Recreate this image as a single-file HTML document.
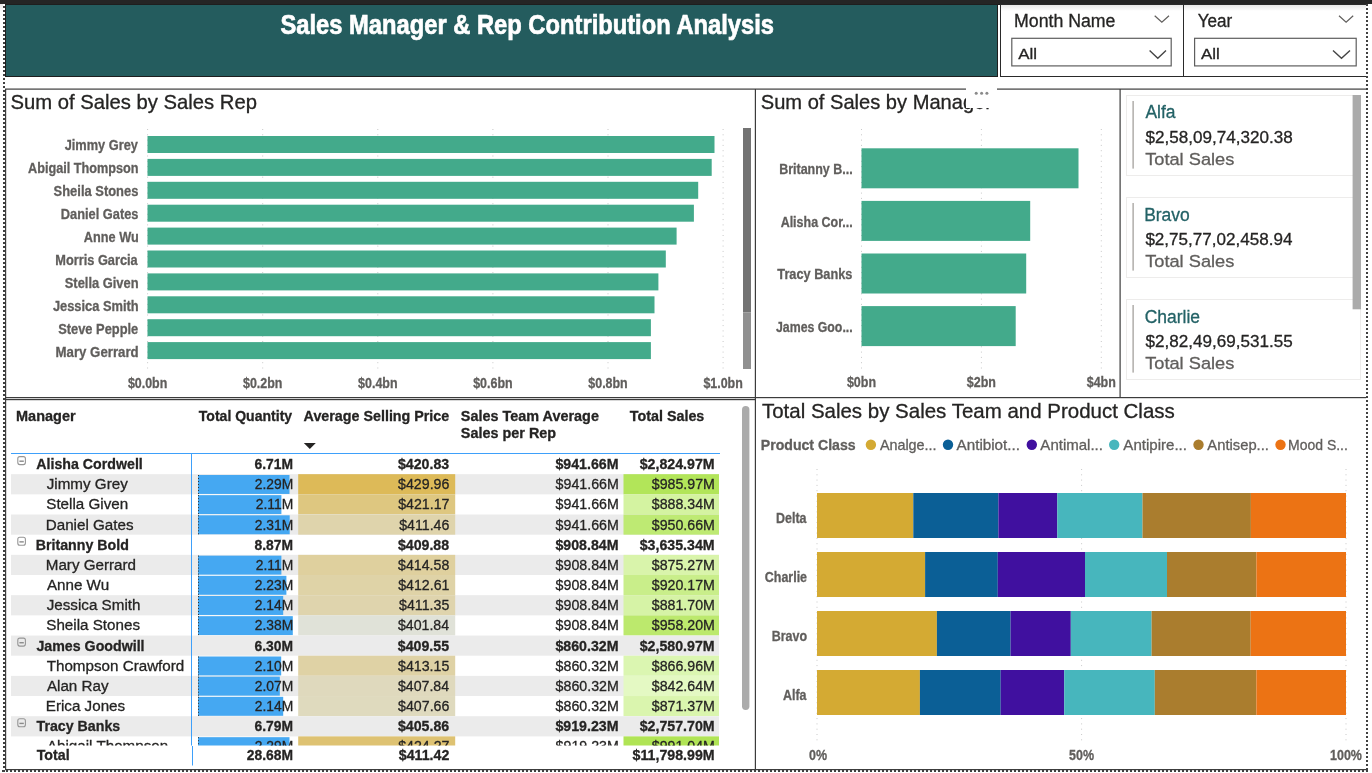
<!DOCTYPE html>
<html><head><meta charset="utf-8"><title>Sales Manager &amp; Rep Contribution Analysis</title><style>html,body{margin:0;padding:0;background:#fff;overflow:hidden}svg{display:block;will-change:transform}text{font-family:"Liberation Sans",sans-serif}</style></head><body>
<svg width="1372" height="773" viewBox="0 0 1372 773" font-family="Liberation Sans, sans-serif">
<rect x="0.00" y="0.00" width="1372.00" height="773.00" fill="#FFFFFF" />
<rect x="0.00" y="0.00" width="1372.00" height="4.00" fill="#252525" />
<rect x="5.00" y="4.00" width="1361.00" height="1.00" fill="#1C1C1C" />
<defs><linearGradient id="sh" x1="0" y1="0" x2="0" y2="1"><stop offset="0" stop-color="#E8E8E8"/><stop offset="1" stop-color="#FFFFFF"/></linearGradient></defs>
<rect x="0.00" y="4.00" width="3.00" height="8.00" fill="url(#sh)" />
<rect x="5.00" y="4.00" width="993.00" height="73.00" fill="#1E1E1E" />
<rect x="6.00" y="5.00" width="991.00" height="71.00" fill="#245C5E" />
<text x="280.43" y="34.10" font-size="27.8" font-weight="bold" fill="#FFFFFF" text-anchor="start" textLength="493.60" lengthAdjust="spacingAndGlyphs" stroke="#FFFFFF" stroke-width="0.7">Sales Manager &amp; Rep Contribution Analysis</text>
<rect x="1000.00" y="4.00" width="366.00" height="73.00" fill="#2A2A2A" />
<rect x="1001.00" y="5.00" width="365.00" height="71.00" fill="#FFFFFF" />
<rect x="1001.00" y="5.00" width="365.00" height="6.00" fill="url(#sh)" />
<rect x="1183.00" y="5.00" width="1.00" height="71.00" fill="#2A2A2A" />
<text x="1014.04" y="27.00" font-size="18" font-weight="normal" fill="#252423" text-anchor="start" textLength="101.40" lengthAdjust="spacingAndGlyphs" stroke="#252423" stroke-width="0.3">Month Name</text>
<polyline points="1154.7,15.8 1161.85,22.3 1169,15.8" fill="none" stroke="#605E5C" stroke-width="1.2"/>
<rect x="1011.8" y="38.3" width="159.4" height="27.6" fill="#FFFFFF" stroke="#5E5E5E" stroke-width="1.2"/>
<text x="1018.27" y="58.70" font-size="14.5" font-weight="normal" fill="#252423" text-anchor="start" textLength="18.79" lengthAdjust="spacingAndGlyphs" stroke="#252423" stroke-width="0.3">All</text>
<polyline points="1149.6,50.6 1157.8,58.2 1166,50.6" fill="none" stroke="#444" stroke-width="1.4"/>
<text x="1197.73" y="27.00" font-size="18" font-weight="normal" fill="#252423" text-anchor="start" textLength="34.58" lengthAdjust="spacingAndGlyphs" stroke="#252423" stroke-width="0.3">Year</text>
<polyline points="1339,15.8 1346.1,22.3 1353.2,15.8" fill="none" stroke="#605E5C" stroke-width="1.2"/>
<rect x="1194.6" y="38.3" width="161.6" height="27.6" fill="#FFFFFF" stroke="#5E5E5E" stroke-width="1.2"/>
<text x="1201.07" y="58.70" font-size="14.5" font-weight="normal" fill="#252423" text-anchor="start" textLength="18.79" lengthAdjust="spacingAndGlyphs" stroke="#252423" stroke-width="0.3">All</text>
<polyline points="1333,50.6 1341.5,58.2 1350,50.6" fill="none" stroke="#444" stroke-width="1.4"/>
<line x1="4" y1="6" x2="4" y2="772" stroke="#404040" stroke-width="2" stroke-dasharray="2 2"/>
<line x1="1367" y1="4" x2="1367" y2="772" stroke="#404040" stroke-width="2" stroke-dasharray="2 2"/>
<line x1="2" y1="771" x2="1368" y2="771" stroke="#404040" stroke-width="2" stroke-dasharray="2 2"/>
<rect x="5.00" y="88.50" width="961.00" height="1.20" fill="#3C3C3C" />
<rect x="997.00" y="88.50" width="369.00" height="1.20" fill="#3C3C3C" />
<rect x="5.00" y="397.00" width="1361.00" height="1.20" fill="#3C3C3C" />
<rect x="5.00" y="398.20" width="750.00" height="0.80" fill="#D0D0D0" />
<rect x="5.00" y="399.00" width="750.00" height="1.20" fill="#3C3C3C" />
<rect x="5.00" y="769.00" width="1361.00" height="1.20" fill="#3C3C3C" />
<rect x="5.00" y="89.00" width="1.20" height="681.00" fill="#3C3C3C" />
<rect x="754.80" y="89.00" width="1.20" height="681.00" fill="#3C3C3C" />
<rect x="1119.50" y="89.00" width="1.20" height="309.00" fill="#3C3C3C" />
<text x="10.44" y="108.90" font-size="20.3" font-weight="normal" fill="#252423" text-anchor="start" textLength="246.49" lengthAdjust="spacingAndGlyphs" stroke="#252423" stroke-width="0.3">Sum of Sales by Sales Rep</text>
<line x1="147.6" y1="129" x2="147.6" y2="372" stroke="#C8C8C8" stroke-width="1" stroke-dasharray="1 4.3"/>
<line x1="262.7" y1="129" x2="262.7" y2="372" stroke="#C8C8C8" stroke-width="1" stroke-dasharray="1 4.3"/>
<line x1="377.8" y1="129" x2="377.8" y2="372" stroke="#C8C8C8" stroke-width="1" stroke-dasharray="1 4.3"/>
<line x1="492.9" y1="129" x2="492.9" y2="372" stroke="#C8C8C8" stroke-width="1" stroke-dasharray="1 4.3"/>
<line x1="608.0" y1="129" x2="608.0" y2="372" stroke="#C8C8C8" stroke-width="1" stroke-dasharray="1 4.3"/>
<line x1="723.1" y1="129" x2="723.1" y2="372" stroke="#C8C8C8" stroke-width="1" stroke-dasharray="1 4.3"/>
<rect x="147.50" y="136.00" width="567.00" height="17.00" fill="#43AA8B" />
<text x="64.68" y="150.40" font-size="14.5" font-weight="bold" fill="#605E5C" text-anchor="start" textLength="73.23" lengthAdjust="spacingAndGlyphs" stroke="#605E5C" stroke-width="0.3">Jimmy Grey</text>
<rect x="147.50" y="158.90" width="564.20" height="17.00" fill="#43AA8B" />
<text x="28.05" y="173.30" font-size="14.5" font-weight="bold" fill="#605E5C" text-anchor="start" textLength="110.56" lengthAdjust="spacingAndGlyphs" stroke="#605E5C" stroke-width="0.3">Abigail Thompson</text>
<rect x="147.50" y="181.80" width="550.70" height="17.00" fill="#43AA8B" />
<text x="53.58" y="196.20" font-size="14.5" font-weight="bold" fill="#605E5C" text-anchor="start" textLength="84.81" lengthAdjust="spacingAndGlyphs" stroke="#605E5C" stroke-width="0.3">Sheila Stones</text>
<rect x="147.50" y="204.70" width="546.40" height="17.00" fill="#43AA8B" />
<text x="60.84" y="219.10" font-size="14.5" font-weight="bold" fill="#605E5C" text-anchor="start" textLength="77.55" lengthAdjust="spacingAndGlyphs" stroke="#605E5C" stroke-width="0.3">Daniel Gates</text>
<rect x="147.50" y="227.60" width="529.10" height="17.00" fill="#43AA8B" />
<text x="83.85" y="242.00" font-size="14.5" font-weight="bold" fill="#605E5C" text-anchor="start" textLength="54.80" lengthAdjust="spacingAndGlyphs" stroke="#605E5C" stroke-width="0.3">Anne Wu</text>
<rect x="147.50" y="250.50" width="518.30" height="17.00" fill="#43AA8B" />
<text x="55.34" y="264.90" font-size="14.5" font-weight="bold" fill="#605E5C" text-anchor="start" textLength="82.40" lengthAdjust="spacingAndGlyphs" stroke="#605E5C" stroke-width="0.3">Morris Garcia</text>
<rect x="147.50" y="273.40" width="510.90" height="17.00" fill="#43AA8B" />
<text x="64.78" y="287.80" font-size="14.5" font-weight="bold" fill="#605E5C" text-anchor="start" textLength="73.82" lengthAdjust="spacingAndGlyphs" stroke="#605E5C" stroke-width="0.3">Stella Given</text>
<rect x="147.50" y="296.30" width="507.00" height="17.00" fill="#43AA8B" />
<text x="52.88" y="310.70" font-size="14.5" font-weight="bold" fill="#605E5C" text-anchor="start" textLength="85.74" lengthAdjust="spacingAndGlyphs" stroke="#605E5C" stroke-width="0.3">Jessica Smith</text>
<rect x="147.50" y="319.20" width="503.40" height="17.00" fill="#43AA8B" />
<text x="58.18" y="333.60" font-size="14.5" font-weight="bold" fill="#605E5C" text-anchor="start" textLength="80.10" lengthAdjust="spacingAndGlyphs" stroke="#605E5C" stroke-width="0.3">Steve Pepple</text>
<rect x="147.50" y="342.10" width="503.40" height="17.00" fill="#43AA8B" />
<text x="55.51" y="356.50" font-size="14.5" font-weight="bold" fill="#605E5C" text-anchor="start" textLength="83.20" lengthAdjust="spacingAndGlyphs" stroke="#605E5C" stroke-width="0.3">Mary Gerrard</text>
<text x="147.60" y="387.60" font-size="14.5" font-weight="bold" fill="#605E5C" text-anchor="middle" textLength="39.40" lengthAdjust="spacingAndGlyphs" stroke="#605E5C" stroke-width="0.3">$0.0bn</text>
<text x="262.70" y="387.60" font-size="14.5" font-weight="bold" fill="#605E5C" text-anchor="middle" textLength="39.40" lengthAdjust="spacingAndGlyphs" stroke="#605E5C" stroke-width="0.3">$0.2bn</text>
<text x="377.80" y="387.60" font-size="14.5" font-weight="bold" fill="#605E5C" text-anchor="middle" textLength="39.40" lengthAdjust="spacingAndGlyphs" stroke="#605E5C" stroke-width="0.3">$0.4bn</text>
<text x="492.90" y="387.60" font-size="14.5" font-weight="bold" fill="#605E5C" text-anchor="middle" textLength="39.40" lengthAdjust="spacingAndGlyphs" stroke="#605E5C" stroke-width="0.3">$0.6bn</text>
<text x="608.00" y="387.60" font-size="14.5" font-weight="bold" fill="#605E5C" text-anchor="middle" textLength="39.40" lengthAdjust="spacingAndGlyphs" stroke="#605E5C" stroke-width="0.3">$0.8bn</text>
<text x="723.10" y="387.60" font-size="14.5" font-weight="bold" fill="#605E5C" text-anchor="middle" textLength="39.40" lengthAdjust="spacingAndGlyphs" stroke="#605E5C" stroke-width="0.3">$1.0bn</text>
<rect x="743.00" y="128.00" width="8.00" height="184.50" fill="#737373" />
<rect x="743.00" y="312.50" width="8.00" height="56.50" fill="#909090" />
<text x="760.75" y="108.60" font-size="20.3" font-weight="normal" fill="#252423" text-anchor="start" textLength="231.24" lengthAdjust="spacingAndGlyphs" stroke="#252423" stroke-width="0.3">Sum of Sales by Manager</text>
<rect x="966.00" y="82.00" width="31.00" height="26.00" fill="#FFFFFF" />
<rect x="966.00" y="82.00" width="31.00" height="7.00" fill="#FFFFFF" />
<circle cx="976.2" cy="93.2" r="1.5" fill="#8A8A8A"/>
<circle cx="981.6" cy="93.2" r="1.5" fill="#8A8A8A"/>
<circle cx="986.9" cy="93.2" r="1.5" fill="#8A8A8A"/>
<line x1="861.5" y1="129" x2="861.5" y2="372" stroke="#C8C8C8" stroke-width="1" stroke-dasharray="1 4.3"/>
<line x1="981.4" y1="129" x2="981.4" y2="372" stroke="#C8C8C8" stroke-width="1" stroke-dasharray="1 4.3"/>
<line x1="1101.3" y1="129" x2="1101.3" y2="372" stroke="#C8C8C8" stroke-width="1" stroke-dasharray="1 4.3"/>
<rect x="861.50" y="148.30" width="217.00" height="40.00" fill="#43AA8B" />
<text x="779.16" y="174.20" font-size="14.5" font-weight="bold" fill="#605E5C" text-anchor="start" textLength="73.54" lengthAdjust="spacingAndGlyphs" stroke="#605E5C" stroke-width="0.3">Britanny B...</text>
<rect x="861.50" y="200.90" width="168.70" height="40.00" fill="#43AA8B" />
<text x="780.66" y="226.80" font-size="14.5" font-weight="bold" fill="#605E5C" text-anchor="start" textLength="72.04" lengthAdjust="spacingAndGlyphs" stroke="#605E5C" stroke-width="0.3">Alisha Cor...</text>
<rect x="861.50" y="253.50" width="164.70" height="40.00" fill="#43AA8B" />
<text x="777.34" y="279.40" font-size="14.5" font-weight="bold" fill="#605E5C" text-anchor="start" textLength="75.04" lengthAdjust="spacingAndGlyphs" stroke="#605E5C" stroke-width="0.3">Tracy Banks</text>
<rect x="861.50" y="306.10" width="154.20" height="40.00" fill="#43AA8B" />
<text x="775.98" y="332.00" font-size="14.5" font-weight="bold" fill="#605E5C" text-anchor="start" textLength="76.70" lengthAdjust="spacingAndGlyphs" stroke="#605E5C" stroke-width="0.3">James Goo...</text>
<text x="861.50" y="387.00" font-size="14.5" font-weight="bold" fill="#605E5C" text-anchor="middle" textLength="29.11" lengthAdjust="spacingAndGlyphs" stroke="#605E5C" stroke-width="0.3">$0bn</text>
<text x="981.40" y="387.00" font-size="14.5" font-weight="bold" fill="#605E5C" text-anchor="middle" textLength="29.11" lengthAdjust="spacingAndGlyphs" stroke="#605E5C" stroke-width="0.3">$2bn</text>
<text x="1101.30" y="387.00" font-size="14.5" font-weight="bold" fill="#605E5C" text-anchor="middle" textLength="29.11" lengthAdjust="spacingAndGlyphs" stroke="#605E5C" stroke-width="0.3">$4bn</text>
<rect x="1126.5" y="95.5" width="234" height="80" fill="#FFFFFF" stroke="#EDECEB" stroke-width="1"/>
<rect x="1132.30" y="101.00" width="1.70" height="67.60" fill="#B9B7B4" />
<text x="1145.47" y="117.90" font-size="18" font-weight="normal" fill="#236266" text-anchor="start" textLength="30.09" lengthAdjust="spacingAndGlyphs" stroke="#236266" stroke-width="0.3">Alfa</text>
<text x="1145.39" y="143.10" font-size="17.4" font-weight="normal" fill="#252423" text-anchor="start" textLength="147.33" lengthAdjust="spacingAndGlyphs" stroke="#252423" stroke-width="0.3">$2,58,09,74,320.38</text>
<text x="1145.19" y="164.90" font-size="17.4" font-weight="normal" fill="#605E5C" text-anchor="start" textLength="89.12" lengthAdjust="spacingAndGlyphs" stroke="#605E5C" stroke-width="0.3">Total Sales</text>
<rect x="1126.5" y="197.5" width="234" height="80" fill="#FFFFFF" stroke="#EDECEB" stroke-width="1"/>
<rect x="1132.30" y="203.00" width="1.70" height="67.60" fill="#B9B7B4" />
<text x="1144.16" y="220.70" font-size="18" font-weight="normal" fill="#236266" text-anchor="start" textLength="45.61" lengthAdjust="spacingAndGlyphs" stroke="#236266" stroke-width="0.3">Bravo</text>
<text x="1145.39" y="245.10" font-size="17.4" font-weight="normal" fill="#252423" text-anchor="start" textLength="147.16" lengthAdjust="spacingAndGlyphs" stroke="#252423" stroke-width="0.3">$2,75,77,02,458.94</text>
<text x="1145.19" y="266.90" font-size="17.4" font-weight="normal" fill="#605E5C" text-anchor="start" textLength="89.12" lengthAdjust="spacingAndGlyphs" stroke="#605E5C" stroke-width="0.3">Total Sales</text>
<rect x="1126.5" y="299.5" width="234" height="80" fill="#FFFFFF" stroke="#EDECEB" stroke-width="1"/>
<rect x="1132.30" y="305.00" width="1.70" height="67.60" fill="#B9B7B4" />
<text x="1144.68" y="322.50" font-size="18" font-weight="normal" fill="#236266" text-anchor="start" textLength="55.32" lengthAdjust="spacingAndGlyphs" stroke="#236266" stroke-width="0.3">Charlie</text>
<text x="1145.39" y="347.10" font-size="17.4" font-weight="normal" fill="#252423" text-anchor="start" textLength="147.33" lengthAdjust="spacingAndGlyphs" stroke="#252423" stroke-width="0.3">$2,82,49,69,531.55</text>
<text x="1145.19" y="368.90" font-size="17.4" font-weight="normal" fill="#605E5C" text-anchor="start" textLength="89.12" lengthAdjust="spacingAndGlyphs" stroke="#605E5C" stroke-width="0.3">Total Sales</text>
<rect x="1352.60" y="95.00" width="8.40" height="214.30" fill="#ABABAB" />
<text x="16.02" y="421.20" font-size="15.3" font-weight="bold" fill="#252423" text-anchor="start" textLength="59.59" lengthAdjust="spacingAndGlyphs" stroke="#252423" stroke-width="0.3">Manager</text>
<text x="198.82" y="421.20" font-size="15.3" font-weight="bold" fill="#252423" text-anchor="start" textLength="93.32" lengthAdjust="spacingAndGlyphs" stroke="#252423" stroke-width="0.3">Total Quantity</text>
<text x="303.61" y="421.20" font-size="15.3" font-weight="bold" fill="#252423" text-anchor="start" textLength="145.63" lengthAdjust="spacingAndGlyphs" stroke="#252423" stroke-width="0.3">Average Selling Price</text>
<text x="460.83" y="421.20" font-size="15.3" font-weight="bold" fill="#252423" text-anchor="start" textLength="138.11" lengthAdjust="spacingAndGlyphs" stroke="#252423" stroke-width="0.3">Sales Team Average</text>
<text x="460.83" y="437.90" font-size="15.3" font-weight="bold" fill="#252423" text-anchor="start" textLength="95.27" lengthAdjust="spacingAndGlyphs" stroke="#252423" stroke-width="0.3">Sales per Rep</text>
<text x="629.82" y="421.20" font-size="15.3" font-weight="bold" fill="#252423" text-anchor="start" textLength="74.50" lengthAdjust="spacingAndGlyphs" stroke="#252423" stroke-width="0.3">Total Sales</text>
<polygon points="303.8,443 315.8,443 309.8,449" fill="#252423"/>
<clipPath id="tclip"><rect x="6" y="454" width="740" height="291.5"/></clipPath>
<g clip-path="url(#tclip)">
<rect x="17.8" y="456.6" width="7.6" height="8" rx="2" fill="none" stroke="#959595" stroke-width="1.1"/>
<rect x="19.40" y="460.50" width="4.40" height="1.40" fill="#8A8A8A" />
<text x="36.31" y="469.00" font-size="15.3" font-weight="bold" fill="#252423" text-anchor="start" textLength="106.51" lengthAdjust="spacingAndGlyphs" stroke="#252423" stroke-width="0.3">Alisha Cordwell</text>
<text x="254.51" y="469.00" font-size="15.3" font-weight="bold" fill="#252423" text-anchor="start" textLength="38.48" lengthAdjust="spacingAndGlyphs" stroke="#252423" stroke-width="0.3">6.71M</text>
<text x="397.96" y="469.00" font-size="15.3" font-weight="bold" fill="#252423" text-anchor="start" textLength="51.27" lengthAdjust="spacingAndGlyphs" stroke="#252423" stroke-width="0.3">$420.83</text>
<text x="555.38" y="469.00" font-size="15.3" font-weight="bold" fill="#252423" text-anchor="start" textLength="63.22" lengthAdjust="spacingAndGlyphs" stroke="#252423" stroke-width="0.3">$941.66M</text>
<text x="639.69" y="469.00" font-size="15.3" font-weight="bold" fill="#252423" text-anchor="start" textLength="74.99" lengthAdjust="spacingAndGlyphs" stroke="#252423" stroke-width="0.3">$2,824.97M</text>
<rect x="11.00" y="474.17" width="708.00" height="20.17" fill="#EBEBEB" />
<rect x="298.20" y="474.17" width="157.00" height="20.17" fill="#DDBA58" />
<rect x="623.50" y="474.17" width="95.50" height="20.17" fill="#B2E559" />
<rect x="198.00" y="474.97" width="91.50" height="18.97" fill="#45A8F2" />
<line x1="198.5" y1="475.0" x2="198.5" y2="493.9" stroke="#333" stroke-width="1" stroke-dasharray="1 2"/>
<text x="46.73" y="489.17" font-size="15.3" font-weight="normal" fill="#252423" text-anchor="start" textLength="81.03" lengthAdjust="spacingAndGlyphs" stroke="#252423" stroke-width="0.3">Jimmy Grey</text>
<text x="254.72" y="489.17" font-size="15.3" font-weight="normal" fill="#252423" text-anchor="start" textLength="38.48" lengthAdjust="spacingAndGlyphs" stroke="#252423" stroke-width="0.3">2.29M</text>
<text x="398.10" y="489.17" font-size="15.3" font-weight="normal" fill="#252423" text-anchor="start" textLength="51.27" lengthAdjust="spacingAndGlyphs" stroke="#252423" stroke-width="0.3">$429.96</text>
<text x="555.59" y="489.17" font-size="15.3" font-weight="normal" fill="#252423" text-anchor="start" textLength="63.22" lengthAdjust="spacingAndGlyphs" stroke="#252423" stroke-width="0.3">$941.66M</text>
<text x="651.76" y="489.17" font-size="15.3" font-weight="normal" fill="#252423" text-anchor="start" textLength="63.15" lengthAdjust="spacingAndGlyphs" stroke="#252423" stroke-width="0.3">$985.97M</text>
<rect x="298.20" y="494.34" width="157.00" height="20.17" fill="#DEC780" />
<rect x="623.50" y="494.34" width="95.50" height="20.17" fill="#D4F3A1" />
<rect x="198.00" y="495.14" width="83.40" height="18.97" fill="#45A8F2" />
<line x1="198.5" y1="495.1" x2="198.5" y2="514.1" stroke="#333" stroke-width="1" stroke-dasharray="1 2"/>
<text x="46.28" y="509.34" font-size="15.3" font-weight="normal" fill="#252423" text-anchor="start" textLength="81.92" lengthAdjust="spacingAndGlyphs" stroke="#252423" stroke-width="0.3">Stella Given</text>
<text x="255.76" y="509.34" font-size="15.3" font-weight="normal" fill="#252423" text-anchor="start" textLength="37.46" lengthAdjust="spacingAndGlyphs" stroke="#252423" stroke-width="0.3">2.11M</text>
<text x="398.17" y="509.34" font-size="15.3" font-weight="normal" fill="#252423" text-anchor="start" textLength="51.27" lengthAdjust="spacingAndGlyphs" stroke="#252423" stroke-width="0.3">$421.17</text>
<text x="555.59" y="509.34" font-size="15.3" font-weight="normal" fill="#252423" text-anchor="start" textLength="63.22" lengthAdjust="spacingAndGlyphs" stroke="#252423" stroke-width="0.3">$941.66M</text>
<text x="651.76" y="509.34" font-size="15.3" font-weight="normal" fill="#252423" text-anchor="start" textLength="63.15" lengthAdjust="spacingAndGlyphs" stroke="#252423" stroke-width="0.3">$888.34M</text>
<rect x="11.00" y="514.51" width="708.00" height="20.17" fill="#EBEBEB" />
<rect x="298.20" y="514.51" width="157.00" height="20.17" fill="#DFD4AC" />
<rect x="623.50" y="514.51" width="95.50" height="20.17" fill="#BEEA73" />
<rect x="198.00" y="515.31" width="91.70" height="18.97" fill="#45A8F2" />
<line x1="198.5" y1="515.3" x2="198.5" y2="534.3" stroke="#333" stroke-width="1" stroke-dasharray="1 2"/>
<text x="45.75" y="529.51" font-size="15.3" font-weight="normal" fill="#252423" text-anchor="start" textLength="87.83" lengthAdjust="spacingAndGlyphs" stroke="#252423" stroke-width="0.3">Daniel Gates</text>
<text x="254.72" y="529.51" font-size="15.3" font-weight="normal" fill="#252423" text-anchor="start" textLength="38.48" lengthAdjust="spacingAndGlyphs" stroke="#252423" stroke-width="0.3">2.31M</text>
<text x="399.17" y="529.51" font-size="15.3" font-weight="normal" fill="#252423" text-anchor="start" textLength="50.22" lengthAdjust="spacingAndGlyphs" stroke="#252423" stroke-width="0.3">$411.46</text>
<text x="555.59" y="529.51" font-size="15.3" font-weight="normal" fill="#252423" text-anchor="start" textLength="63.22" lengthAdjust="spacingAndGlyphs" stroke="#252423" stroke-width="0.3">$941.66M</text>
<text x="651.76" y="529.51" font-size="15.3" font-weight="normal" fill="#252423" text-anchor="start" textLength="63.15" lengthAdjust="spacingAndGlyphs" stroke="#252423" stroke-width="0.3">$950.66M</text>
<rect x="17.8" y="537.3" width="7.6" height="8" rx="2" fill="none" stroke="#959595" stroke-width="1.1"/>
<rect x="19.40" y="541.18" width="4.40" height="1.40" fill="#8A8A8A" />
<text x="35.74" y="549.68" font-size="15.3" font-weight="bold" fill="#252423" text-anchor="start" textLength="93.08" lengthAdjust="spacingAndGlyphs" stroke="#252423" stroke-width="0.3">Britanny Bold</text>
<text x="254.51" y="549.68" font-size="15.3" font-weight="bold" fill="#252423" text-anchor="start" textLength="38.48" lengthAdjust="spacingAndGlyphs" stroke="#252423" stroke-width="0.3">8.87M</text>
<text x="397.89" y="549.68" font-size="15.3" font-weight="bold" fill="#252423" text-anchor="start" textLength="51.27" lengthAdjust="spacingAndGlyphs" stroke="#252423" stroke-width="0.3">$409.88</text>
<text x="555.38" y="549.68" font-size="15.3" font-weight="bold" fill="#252423" text-anchor="start" textLength="63.22" lengthAdjust="spacingAndGlyphs" stroke="#252423" stroke-width="0.3">$908.84M</text>
<text x="639.69" y="549.68" font-size="15.3" font-weight="bold" fill="#252423" text-anchor="start" textLength="74.99" lengthAdjust="spacingAndGlyphs" stroke="#252423" stroke-width="0.3">$3,635.34M</text>
<rect x="11.00" y="554.85" width="708.00" height="20.17" fill="#EBEBEB" />
<rect x="298.20" y="554.85" width="157.00" height="20.17" fill="#DFD09E" />
<rect x="623.50" y="554.85" width="95.50" height="20.17" fill="#D9F4AB" />
<rect x="198.00" y="555.65" width="83.40" height="18.97" fill="#45A8F2" />
<line x1="198.5" y1="555.6" x2="198.5" y2="574.6" stroke="#333" stroke-width="1" stroke-dasharray="1 2"/>
<text x="45.75" y="569.85" font-size="15.3" font-weight="normal" fill="#252423" text-anchor="start" textLength="90.33" lengthAdjust="spacingAndGlyphs" stroke="#252423" stroke-width="0.3">Mary Gerrard</text>
<text x="255.76" y="569.85" font-size="15.3" font-weight="normal" fill="#252423" text-anchor="start" textLength="37.46" lengthAdjust="spacingAndGlyphs" stroke="#252423" stroke-width="0.3">2.11M</text>
<text x="398.03" y="569.85" font-size="15.3" font-weight="normal" fill="#252423" text-anchor="start" textLength="51.27" lengthAdjust="spacingAndGlyphs" stroke="#252423" stroke-width="0.3">$414.58</text>
<text x="555.59" y="569.85" font-size="15.3" font-weight="normal" fill="#252423" text-anchor="start" textLength="63.22" lengthAdjust="spacingAndGlyphs" stroke="#252423" stroke-width="0.3">$908.84M</text>
<text x="651.76" y="569.85" font-size="15.3" font-weight="normal" fill="#252423" text-anchor="start" textLength="63.15" lengthAdjust="spacingAndGlyphs" stroke="#252423" stroke-width="0.3">$875.27M</text>
<rect x="298.20" y="575.02" width="157.00" height="20.17" fill="#DFD3A7" />
<rect x="623.50" y="575.02" width="95.50" height="20.17" fill="#C9EE8A" />
<rect x="198.00" y="575.82" width="88.40" height="18.97" fill="#45A8F2" />
<line x1="198.5" y1="575.8" x2="198.5" y2="594.8" stroke="#333" stroke-width="1" stroke-dasharray="1 2"/>
<text x="46.89" y="590.02" font-size="15.3" font-weight="normal" fill="#252423" text-anchor="start" textLength="62.22" lengthAdjust="spacingAndGlyphs" stroke="#252423" stroke-width="0.3">Anne Wu</text>
<text x="254.72" y="590.02" font-size="15.3" font-weight="normal" fill="#252423" text-anchor="start" textLength="38.48" lengthAdjust="spacingAndGlyphs" stroke="#252423" stroke-width="0.3">2.23M</text>
<text x="398.17" y="590.02" font-size="15.3" font-weight="normal" fill="#252423" text-anchor="start" textLength="51.27" lengthAdjust="spacingAndGlyphs" stroke="#252423" stroke-width="0.3">$412.61</text>
<text x="555.59" y="590.02" font-size="15.3" font-weight="normal" fill="#252423" text-anchor="start" textLength="63.22" lengthAdjust="spacingAndGlyphs" stroke="#252423" stroke-width="0.3">$908.84M</text>
<text x="651.76" y="590.02" font-size="15.3" font-weight="normal" fill="#252423" text-anchor="start" textLength="63.15" lengthAdjust="spacingAndGlyphs" stroke="#252423" stroke-width="0.3">$920.17M</text>
<rect x="11.00" y="595.19" width="708.00" height="20.17" fill="#EBEBEB" />
<rect x="298.20" y="595.19" width="157.00" height="20.17" fill="#DFD4AD" />
<rect x="623.50" y="595.19" width="95.50" height="20.17" fill="#D6F3A6" />
<rect x="198.00" y="595.99" width="85.20" height="18.97" fill="#45A8F2" />
<line x1="198.5" y1="596.0" x2="198.5" y2="615.0" stroke="#333" stroke-width="1" stroke-dasharray="1 2"/>
<text x="46.73" y="610.19" font-size="15.3" font-weight="normal" fill="#252423" text-anchor="start" textLength="93.72" lengthAdjust="spacingAndGlyphs" stroke="#252423" stroke-width="0.3">Jessica Smith</text>
<text x="254.72" y="610.19" font-size="15.3" font-weight="normal" fill="#252423" text-anchor="start" textLength="38.48" lengthAdjust="spacingAndGlyphs" stroke="#252423" stroke-width="0.3">2.14M</text>
<text x="399.09" y="610.19" font-size="15.3" font-weight="normal" fill="#252423" text-anchor="start" textLength="50.22" lengthAdjust="spacingAndGlyphs" stroke="#252423" stroke-width="0.3">$411.35</text>
<text x="555.59" y="610.19" font-size="15.3" font-weight="normal" fill="#252423" text-anchor="start" textLength="63.22" lengthAdjust="spacingAndGlyphs" stroke="#252423" stroke-width="0.3">$908.84M</text>
<text x="651.76" y="610.19" font-size="15.3" font-weight="normal" fill="#252423" text-anchor="start" textLength="63.15" lengthAdjust="spacingAndGlyphs" stroke="#252423" stroke-width="0.3">$881.70M</text>
<rect x="298.20" y="615.36" width="157.00" height="20.17" fill="#E0E2D8" />
<rect x="623.50" y="615.36" width="95.50" height="20.17" fill="#BCE96D" />
<rect x="198.00" y="616.16" width="94.80" height="18.97" fill="#45A8F2" />
<line x1="198.5" y1="616.2" x2="198.5" y2="635.1" stroke="#333" stroke-width="1" stroke-dasharray="1 2"/>
<text x="46.28" y="630.36" font-size="15.3" font-weight="normal" fill="#252423" text-anchor="start" textLength="93.76" lengthAdjust="spacingAndGlyphs" stroke="#252423" stroke-width="0.3">Sheila Stones</text>
<text x="254.72" y="630.36" font-size="15.3" font-weight="normal" fill="#252423" text-anchor="start" textLength="38.48" lengthAdjust="spacingAndGlyphs" stroke="#252423" stroke-width="0.3">2.38M</text>
<text x="397.89" y="630.36" font-size="15.3" font-weight="normal" fill="#252423" text-anchor="start" textLength="51.27" lengthAdjust="spacingAndGlyphs" stroke="#252423" stroke-width="0.3">$401.84</text>
<text x="555.59" y="630.36" font-size="15.3" font-weight="normal" fill="#252423" text-anchor="start" textLength="63.22" lengthAdjust="spacingAndGlyphs" stroke="#252423" stroke-width="0.3">$908.84M</text>
<text x="651.76" y="630.36" font-size="15.3" font-weight="normal" fill="#252423" text-anchor="start" textLength="63.15" lengthAdjust="spacingAndGlyphs" stroke="#252423" stroke-width="0.3">$958.20M</text>
<rect x="11.00" y="635.53" width="708.00" height="20.17" fill="#EBEBEB" />
<rect x="17.8" y="638.1" width="7.6" height="8" rx="2" fill="none" stroke="#959595" stroke-width="1.1"/>
<rect x="19.40" y="642.03" width="4.40" height="1.40" fill="#8A8A8A" />
<text x="36.45" y="650.53" font-size="15.3" font-weight="bold" fill="#252423" text-anchor="start" textLength="108.10" lengthAdjust="spacingAndGlyphs" stroke="#252423" stroke-width="0.3">James Goodwill</text>
<text x="254.51" y="650.53" font-size="15.3" font-weight="bold" fill="#252423" text-anchor="start" textLength="38.48" lengthAdjust="spacingAndGlyphs" stroke="#252423" stroke-width="0.3">6.30M</text>
<text x="397.82" y="650.53" font-size="15.3" font-weight="bold" fill="#252423" text-anchor="start" textLength="51.27" lengthAdjust="spacingAndGlyphs" stroke="#252423" stroke-width="0.3">$409.55</text>
<text x="555.38" y="650.53" font-size="15.3" font-weight="bold" fill="#252423" text-anchor="start" textLength="63.22" lengthAdjust="spacingAndGlyphs" stroke="#252423" stroke-width="0.3">$860.32M</text>
<text x="639.69" y="650.53" font-size="15.3" font-weight="bold" fill="#252423" text-anchor="start" textLength="74.99" lengthAdjust="spacingAndGlyphs" stroke="#252423" stroke-width="0.3">$2,580.97M</text>
<rect x="298.20" y="655.70" width="157.00" height="20.17" fill="#DFD2A5" />
<rect x="623.50" y="655.70" width="95.50" height="20.17" fill="#DBF6B1" />
<rect x="198.00" y="656.50" width="83.20" height="18.97" fill="#45A8F2" />
<line x1="198.5" y1="656.5" x2="198.5" y2="675.5" stroke="#333" stroke-width="1" stroke-dasharray="1 2"/>
<text x="46.66" y="670.70" font-size="15.3" font-weight="normal" fill="#252423" text-anchor="start" textLength="137.64" lengthAdjust="spacingAndGlyphs" stroke="#252423" stroke-width="0.3">Thompson Crawford</text>
<text x="254.72" y="670.70" font-size="15.3" font-weight="normal" fill="#252423" text-anchor="start" textLength="38.48" lengthAdjust="spacingAndGlyphs" stroke="#252423" stroke-width="0.3">2.10M</text>
<text x="398.03" y="670.70" font-size="15.3" font-weight="normal" fill="#252423" text-anchor="start" textLength="51.27" lengthAdjust="spacingAndGlyphs" stroke="#252423" stroke-width="0.3">$413.15</text>
<text x="555.59" y="670.70" font-size="15.3" font-weight="normal" fill="#252423" text-anchor="start" textLength="63.22" lengthAdjust="spacingAndGlyphs" stroke="#252423" stroke-width="0.3">$860.32M</text>
<text x="651.76" y="670.70" font-size="15.3" font-weight="normal" fill="#252423" text-anchor="start" textLength="63.15" lengthAdjust="spacingAndGlyphs" stroke="#252423" stroke-width="0.3">$866.96M</text>
<rect x="11.00" y="675.87" width="708.00" height="20.17" fill="#EBEBEB" />
<rect x="298.20" y="675.87" width="157.00" height="20.17" fill="#DFD9BD" />
<rect x="623.50" y="675.87" width="95.50" height="20.17" fill="#E4F9C3" />
<rect x="198.00" y="676.67" width="81.80" height="18.97" fill="#45A8F2" />
<line x1="198.5" y1="676.7" x2="198.5" y2="695.6" stroke="#333" stroke-width="1" stroke-dasharray="1 2"/>
<text x="46.89" y="690.87" font-size="15.3" font-weight="normal" fill="#252423" text-anchor="start" textLength="61.65" lengthAdjust="spacingAndGlyphs" stroke="#252423" stroke-width="0.3">Alan Ray</text>
<text x="254.72" y="690.87" font-size="15.3" font-weight="normal" fill="#252423" text-anchor="start" textLength="38.48" lengthAdjust="spacingAndGlyphs" stroke="#252423" stroke-width="0.3">2.07M</text>
<text x="397.89" y="690.87" font-size="15.3" font-weight="normal" fill="#252423" text-anchor="start" textLength="51.27" lengthAdjust="spacingAndGlyphs" stroke="#252423" stroke-width="0.3">$407.84</text>
<text x="555.59" y="690.87" font-size="15.3" font-weight="normal" fill="#252423" text-anchor="start" textLength="63.22" lengthAdjust="spacingAndGlyphs" stroke="#252423" stroke-width="0.3">$860.32M</text>
<text x="651.76" y="690.87" font-size="15.3" font-weight="normal" fill="#252423" text-anchor="start" textLength="63.15" lengthAdjust="spacingAndGlyphs" stroke="#252423" stroke-width="0.3">$842.64M</text>
<rect x="298.20" y="696.04" width="157.00" height="20.17" fill="#DFDABE" />
<rect x="623.50" y="696.04" width="95.50" height="20.17" fill="#DAF5AE" />
<rect x="198.00" y="696.84" width="85.20" height="18.97" fill="#45A8F2" />
<line x1="198.5" y1="696.8" x2="198.5" y2="715.8" stroke="#333" stroke-width="1" stroke-dasharray="1 2"/>
<text x="45.75" y="711.04" font-size="15.3" font-weight="normal" fill="#252423" text-anchor="start" textLength="79.38" lengthAdjust="spacingAndGlyphs" stroke="#252423" stroke-width="0.3">Erica Jones</text>
<text x="254.72" y="711.04" font-size="15.3" font-weight="normal" fill="#252423" text-anchor="start" textLength="38.48" lengthAdjust="spacingAndGlyphs" stroke="#252423" stroke-width="0.3">2.14M</text>
<text x="398.10" y="711.04" font-size="15.3" font-weight="normal" fill="#252423" text-anchor="start" textLength="51.27" lengthAdjust="spacingAndGlyphs" stroke="#252423" stroke-width="0.3">$407.66</text>
<text x="555.59" y="711.04" font-size="15.3" font-weight="normal" fill="#252423" text-anchor="start" textLength="63.22" lengthAdjust="spacingAndGlyphs" stroke="#252423" stroke-width="0.3">$860.32M</text>
<text x="651.76" y="711.04" font-size="15.3" font-weight="normal" fill="#252423" text-anchor="start" textLength="63.15" lengthAdjust="spacingAndGlyphs" stroke="#252423" stroke-width="0.3">$871.37M</text>
<rect x="11.00" y="716.21" width="708.00" height="20.17" fill="#EBEBEB" />
<rect x="17.8" y="718.8" width="7.6" height="8" rx="2" fill="none" stroke="#959595" stroke-width="1.1"/>
<rect x="19.40" y="722.71" width="4.40" height="1.40" fill="#8A8A8A" />
<text x="36.52" y="731.21" font-size="15.3" font-weight="bold" fill="#252423" text-anchor="start" textLength="83.67" lengthAdjust="spacingAndGlyphs" stroke="#252423" stroke-width="0.3">Tracy Banks</text>
<text x="254.51" y="731.21" font-size="15.3" font-weight="bold" fill="#252423" text-anchor="start" textLength="38.48" lengthAdjust="spacingAndGlyphs" stroke="#252423" stroke-width="0.3">6.79M</text>
<text x="397.96" y="731.21" font-size="15.3" font-weight="bold" fill="#252423" text-anchor="start" textLength="51.27" lengthAdjust="spacingAndGlyphs" stroke="#252423" stroke-width="0.3">$405.86</text>
<text x="555.38" y="731.21" font-size="15.3" font-weight="bold" fill="#252423" text-anchor="start" textLength="63.22" lengthAdjust="spacingAndGlyphs" stroke="#252423" stroke-width="0.3">$919.23M</text>
<text x="639.69" y="731.21" font-size="15.3" font-weight="bold" fill="#252423" text-anchor="start" textLength="74.99" lengthAdjust="spacingAndGlyphs" stroke="#252423" stroke-width="0.3">$2,757.70M</text>
<rect x="298.20" y="736.38" width="157.00" height="20.17" fill="#DEC272" />
<rect x="623.50" y="736.38" width="95.50" height="20.17" fill="#B0E455" />
<rect x="198.00" y="737.18" width="91.50" height="18.97" fill="#45A8F2" />
<line x1="198.5" y1="737.2" x2="198.5" y2="756.1" stroke="#333" stroke-width="1" stroke-dasharray="1 2"/>
<text x="46.89" y="751.38" font-size="15.3" font-weight="normal" fill="#252423" text-anchor="start" textLength="121.34" lengthAdjust="spacingAndGlyphs" stroke="#252423" stroke-width="0.3">Abigail Thompson</text>
<text x="254.72" y="751.38" font-size="15.3" font-weight="normal" fill="#252423" text-anchor="start" textLength="38.48" lengthAdjust="spacingAndGlyphs" stroke="#252423" stroke-width="0.3">2.29M</text>
<text x="398.17" y="751.38" font-size="15.3" font-weight="normal" fill="#252423" text-anchor="start" textLength="51.27" lengthAdjust="spacingAndGlyphs" stroke="#252423" stroke-width="0.3">$424.27</text>
<text x="555.59" y="751.38" font-size="15.3" font-weight="normal" fill="#252423" text-anchor="start" textLength="63.22" lengthAdjust="spacingAndGlyphs" stroke="#252423" stroke-width="0.3">$919.23M</text>
<text x="651.76" y="751.38" font-size="15.3" font-weight="normal" fill="#252423" text-anchor="start" textLength="63.15" lengthAdjust="spacingAndGlyphs" stroke="#252423" stroke-width="0.3">$991.04M</text>
</g>
<rect x="191.00" y="454.00" width="1.00" height="291.50" fill="#3EA0FA" />
<rect x="11.00" y="453.00" width="709.00" height="1.00" fill="#3EA0FA" />
<text x="36.72" y="760.00" font-size="15.3" font-weight="bold" fill="#252423" text-anchor="start" textLength="32.86" lengthAdjust="spacingAndGlyphs" stroke="#252423" stroke-width="0.3">Total</text>
<text x="246.76" y="760.00" font-size="15.3" font-weight="bold" fill="#252423" text-anchor="start" textLength="46.19" lengthAdjust="spacingAndGlyphs" stroke="#252423" stroke-width="0.3">28.68M</text>
<text x="398.81" y="760.00" font-size="15.3" font-weight="bold" fill="#252423" text-anchor="start" textLength="50.49" lengthAdjust="spacingAndGlyphs" stroke="#252423" stroke-width="0.3">$411.42</text>
<text x="632.59" y="760.00" font-size="15.3" font-weight="bold" fill="#252423" text-anchor="start" textLength="82.11" lengthAdjust="spacingAndGlyphs" stroke="#252423" stroke-width="0.3">$11,798.99M</text>
<rect x="192.00" y="746.00" width="1.00" height="19.50" fill="#3EA0FA" />
<rect x="742" y="406" width="7.4" height="304" rx="3.7" fill="#ABABAB"/>
<text x="761.94" y="417.60" font-size="20.3" font-weight="normal" fill="#252423" text-anchor="start" textLength="412.81" lengthAdjust="spacingAndGlyphs" stroke="#252423" stroke-width="0.3">Total Sales by Sales Team and Product Class</text>
<text x="760.75" y="449.90" font-size="14.5" font-weight="bold" fill="#605E5C" text-anchor="start" textLength="94.84" lengthAdjust="spacingAndGlyphs" stroke="#605E5C" stroke-width="0.3">Product Class</text>
<circle cx="870.9" cy="444.7" r="5.2" fill="#D4AA33"/>
<text x="879.89" y="449.90" font-size="14.5" font-weight="normal" fill="#605E5C" text-anchor="start" textLength="56.67" lengthAdjust="spacingAndGlyphs" stroke="#605E5C" stroke-width="0.3">Analge...</text>
<circle cx="948" cy="444.7" r="5.2" fill="#0B5F96"/>
<text x="956.59" y="449.90" font-size="14.5" font-weight="normal" fill="#605E5C" text-anchor="start" textLength="63.38" lengthAdjust="spacingAndGlyphs" stroke="#605E5C" stroke-width="0.3">Antibiot...</text>
<circle cx="1031.8" cy="444.7" r="5.2" fill="#40109F"/>
<text x="1040.39" y="449.90" font-size="14.5" font-weight="normal" fill="#605E5C" text-anchor="start" textLength="62.55" lengthAdjust="spacingAndGlyphs" stroke="#605E5C" stroke-width="0.3">Antimal...</text>
<circle cx="1114.2" cy="444.7" r="5.2" fill="#47B6BD"/>
<text x="1123.39" y="449.90" font-size="14.5" font-weight="normal" fill="#605E5C" text-anchor="start" textLength="63.57" lengthAdjust="spacingAndGlyphs" stroke="#605E5C" stroke-width="0.3">Antipire...</text>
<circle cx="1198.5" cy="444.7" r="5.2" fill="#AA7D2E"/>
<text x="1207.39" y="449.90" font-size="14.5" font-weight="normal" fill="#605E5C" text-anchor="start" textLength="61.53" lengthAdjust="spacingAndGlyphs" stroke="#605E5C" stroke-width="0.3">Antisep...</text>
<circle cx="1280.5" cy="444.7" r="5.2" fill="#EC7314"/>
<text x="1288.05" y="449.90" font-size="14.5" font-weight="normal" fill="#605E5C" text-anchor="start" textLength="59.81" lengthAdjust="spacingAndGlyphs" stroke="#605E5C" stroke-width="0.3">Mood S...</text>
<line x1="817" y1="469" x2="817" y2="742" stroke="#C8C8C8" stroke-width="1" stroke-dasharray="1 4.3"/>
<line x1="1081.6" y1="469" x2="1081.6" y2="742" stroke="#C8C8C8" stroke-width="1" stroke-dasharray="1 4.3"/>
<line x1="1346" y1="469" x2="1346" y2="742" stroke="#C8C8C8" stroke-width="1" stroke-dasharray="1 4.3"/>
<rect x="817.00" y="493.00" width="96.30" height="45.00" fill="#D4AA33" />
<rect x="913.30" y="493.00" width="85.10" height="45.00" fill="#0B5F96" />
<rect x="998.40" y="493.00" width="58.90" height="45.00" fill="#40109F" />
<rect x="1057.30" y="493.00" width="85.20" height="45.00" fill="#47B6BD" />
<rect x="1142.50" y="493.00" width="108.40" height="45.00" fill="#AA7D2E" />
<rect x="1250.90" y="493.00" width="95.10" height="45.00" fill="#EC7314" />
<text x="776.02" y="522.70" font-size="14.5" font-weight="bold" fill="#605E5C" text-anchor="start" textLength="30.49" lengthAdjust="spacingAndGlyphs" stroke="#605E5C" stroke-width="0.3">Delta</text>
<rect x="817.00" y="552.00" width="108.10" height="45.00" fill="#D4AA33" />
<rect x="925.10" y="552.00" width="72.70" height="45.00" fill="#0B5F96" />
<rect x="997.80" y="552.00" width="87.20" height="45.00" fill="#40109F" />
<rect x="1085.00" y="552.00" width="82.00" height="45.00" fill="#47B6BD" />
<rect x="1167.00" y="552.00" width="89.40" height="45.00" fill="#AA7D2E" />
<rect x="1256.40" y="552.00" width="89.60" height="45.00" fill="#EC7314" />
<text x="764.79" y="581.70" font-size="14.5" font-weight="bold" fill="#605E5C" text-anchor="start" textLength="42.28" lengthAdjust="spacingAndGlyphs" stroke="#605E5C" stroke-width="0.3">Charlie</text>
<rect x="817.00" y="611.00" width="119.90" height="45.00" fill="#D4AA33" />
<rect x="936.90" y="611.00" width="73.70" height="45.00" fill="#0B5F96" />
<rect x="1010.60" y="611.00" width="60.20" height="45.00" fill="#40109F" />
<rect x="1070.80" y="611.00" width="80.80" height="45.00" fill="#47B6BD" />
<rect x="1151.60" y="611.00" width="99.10" height="45.00" fill="#AA7D2E" />
<rect x="1250.70" y="611.00" width="95.30" height="45.00" fill="#EC7314" />
<text x="771.78" y="640.70" font-size="14.5" font-weight="bold" fill="#605E5C" text-anchor="start" textLength="35.35" lengthAdjust="spacingAndGlyphs" stroke="#605E5C" stroke-width="0.3">Bravo</text>
<rect x="817.00" y="670.00" width="102.90" height="45.00" fill="#D4AA33" />
<rect x="919.90" y="670.00" width="80.80" height="45.00" fill="#0B5F96" />
<rect x="1000.70" y="670.00" width="63.50" height="45.00" fill="#40109F" />
<rect x="1064.20" y="670.00" width="90.60" height="45.00" fill="#47B6BD" />
<rect x="1154.80" y="670.00" width="101.60" height="45.00" fill="#AA7D2E" />
<rect x="1256.40" y="670.00" width="89.60" height="45.00" fill="#EC7314" />
<text x="782.94" y="699.70" font-size="14.5" font-weight="bold" fill="#605E5C" text-anchor="start" textLength="23.56" lengthAdjust="spacingAndGlyphs" stroke="#605E5C" stroke-width="0.3">Alfa</text>
<text x="818.00" y="760.00" font-size="14.5" font-weight="bold" fill="#605E5C" text-anchor="middle" textLength="18.02" lengthAdjust="spacingAndGlyphs" stroke="#605E5C" stroke-width="0.3">0%</text>
<text x="1081.60" y="760.00" font-size="14.5" font-weight="bold" fill="#605E5C" text-anchor="middle" textLength="24.96" lengthAdjust="spacingAndGlyphs" stroke="#605E5C" stroke-width="0.3">50%</text>
<text x="1346.00" y="760.00" font-size="14.5" font-weight="bold" fill="#605E5C" text-anchor="middle" textLength="31.89" lengthAdjust="spacingAndGlyphs" stroke="#605E5C" stroke-width="0.3">100%</text>
</svg>
</body></html>
